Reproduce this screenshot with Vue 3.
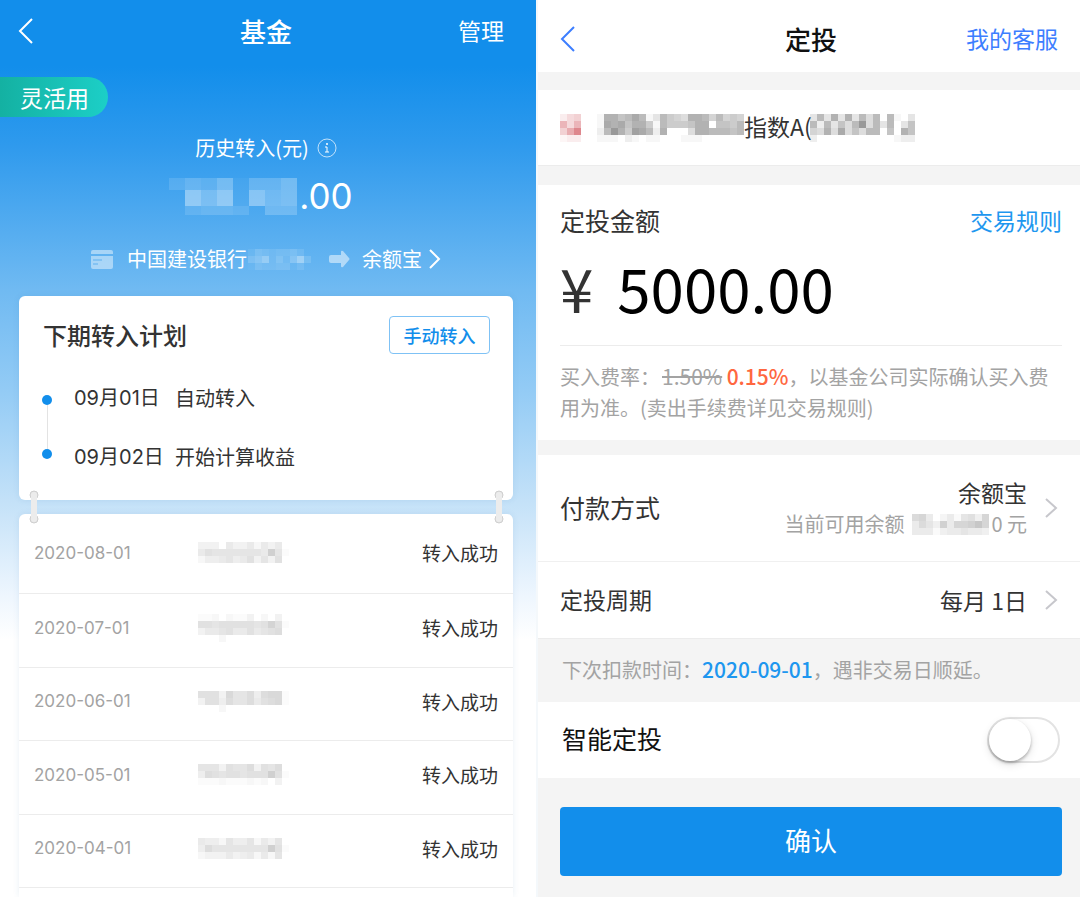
<script setup>
import { h, ref } from 'vue'

// Pixelated cover for private values: each hex digit is the strength of one cell.
const Mosaic = (props) => {
  const heights = props.heights || props.rows.map(() => 7)
  const cell = props.cell || 7
  const width = Math.max(...props.rows.map((r) => r.length)) * cell
  const total = heights.reduce((a, b) => a + b, 0)
  const rects = []
  let y = 0
  props.rows.forEach((row, i) => {
    ;[...row].forEach((c, x) => {
      const v = parseInt(c, 16)
      if (v) {
        rects.push(
          h('rect', {
            x: x * cell,
            y,
            width: cell,
            height: heights[i],
            fill: props.color || '#000',
            'fill-opacity': ((v / 15) * (props.strength || 0.25)).toFixed(3),
          }),
        )
      }
    })
    y += heights[i]
  })
  return h(
    'svg',
    {
      viewBox: `0 0 ${width} ${total}`,
      width,
      height: total,
      'shape-rendering': 'crispEdges',
      'aria-hidden': 'true',
    },
    rects,
  )
}
Mosaic.props = ['rows', 'heights', 'cell', 'color', 'strength']

const plans = [
  { date: '09月01日', text: '自动转入' },
  { date: '09月02日', text: '开始计算收益' },
]

const records = [
  { date: '2020-08-01', rows: ['3330533525350', '5766666665b61', '2445645736370'] },
  { date: '2020-07-01', rows: ['1120211302030', '7767777767a71', '3556755756780', '0002000000000'] },
  { date: '2020-06-01', rows: ['7773966848991', '3774866857891', '0002000000000'] },
  { date: '2020-05-01', rows: ['6663766837680', '4876776777b71', '1112111212030'] },
  { date: '2020-04-01', rows: ['5442644625360', '4866666666b71', '2333534525260'] },
]

const amount = ref('5000.00')
const smart = ref(false)
</script>

<template>
  <main class="screens">
    <section class="fund">
      <header class="bar">
        <button class="back" aria-label="返回">
          <svg width="16" height="28" viewBox="0 0 16 28"><path d="M14 2 2 14l12 12" /></svg>
        </button>
        <h1>基金</h1>
        <a href="#manage">管理</a>
      </header>

      <div class="tag">灵活用</div>

      <div class="summary">
        <div class="history">
          <span>历史转入(元)</span>
          <svg width="20" height="20" viewBox="0 0 20 20">
            <circle cx="10" cy="10" r="9" class="ring" />
            <circle cx="10" cy="6" r="1" class="dot" />
            <path d="M8 9h2v5M8 14h4" class="stem" />
          </svg>
        </div>
        <div class="total">
          <Mosaic
            :rows="['35471557', '0a7a1967', '03443055']"
            :heights="[12, 16, 9]"
            :cell="16"
            color="#fff"
            :strength="0.6"
          />
          <span>.00</span>
        </div>
        <a class="route" href="#route">
          <svg class="card-icon" width="22" height="19" viewBox="0 0 22 19">
            <path d="M2 0h18a2 2 0 0 1 2 2v2H0V2a2 2 0 0 1 2-2ZM0 6h22v11a2 2 0 0 1-2 2H2a2 2 0 0 1-2-2Z" />
            <path d="M2 10h9M2 14h5" class="lines" />
          </svg>
          <span>中国建设银行</span>
          <Mosaic
            class="route-mask"
            :rows="['254344530', '57a3637c4', '143344130']"
            color="#fff"
            :strength="0.5"
          />
          <svg class="arrow" width="21" height="18" viewBox="0 0 21 18">
            <path d="M2 5h10V2q0-2 2-1l6 7q1 1 0 2l-6 7q-2 1-2-1v-3H2q-2 0-2-2V7q0-2 2-2Z" />
          </svg>
          <span>余额宝</span>
          <svg class="go" width="13" height="20" viewBox="0 0 13 20"><path d="m2 1 9 9-9 9" /></svg>
        </a>
      </div>

      <div class="plan">
        <div class="plan-head">
          <h2>下期转入计划</h2>
          <button>手动转入</button>
        </div>
        <ol>
          <li v-for="p in plans" :key="p.date">
            <span class="when">{{ p.date }}</span><span>{{ p.text }}</span>
          </li>
        </ol>
        <svg v-for="side in ['left', 'right']" :key="side" class="ring-bar" :class="side" width="10" height="34" viewBox="0 0 10 34">
          <circle cx="5" cy="5" r="4" />
          <circle cx="5" cy="29" r="4" />
          <path d="M5 5v24" />
        </svg>
      </div>

      <ul class="records">
        <li v-for="r in records" :key="r.date">
          <time>{{ r.date }}</time>
          <Mosaic :rows="r.rows" />
          <span>转入成功</span>
        </li>
      </ul>
    </section>

    <section class="invest">
      <header class="bar light">
        <button class="back" aria-label="返回">
          <svg width="16" height="28" viewBox="0 0 16 28"><path d="M14 2 2 14l12 12" /></svg>
        </button>
        <h1>定投</h1>
        <a href="#service">我的客服</a>
      </header>

      <div class="product">
        <Mosaic class="logo-mask" :rows="['245', '848', '59d', '122']" color="#c01825" :strength="0.6" />
        <Mosaic
          :rows="['19978a813865499858565', '1a9a79961866679907768', '28c96ba82900049988878', '111021011000111000000']"
          :strength="0.5"
        />
        <span>指数A(</span>
        <Mosaic
          class="code-mask"
          :rows="['383939384808103', '8283748c4838037', '5494a4748807097', '200000000000122']"
          :strength="0.5"
        />
      </div>

      <div class="money">
        <div class="money-head">
          <label for="amount">定投金额</label>
          <a href="#rules">交易规则</a>
        </div>
        <div class="money-input">
          <span>¥</span>
          <input id="amount" v-model="amount" type="text" inputmode="decimal" />
        </div>
        <p>
          <span>买入费率：</span><del>1.50%</del> <strong>0.15%</strong><span>，以基金公司实际确认买入费</span><span>用为准。(卖出手续费详见交易规则)</span>
        </p>
      </div>

      <button class="row pay">
        <span class="label">付款方式</span>
        <span class="value">
          <span>余额宝</span>
          <span class="balance">
            <span>当前可用余额</span>
            <Mosaic class="balance-mask" :rows="['78402415638', '475394889b8', '44413445443']" :strength="0.3" />
            <span>0 元</span>
          </span>
        </span>
        <svg width="13" height="22" viewBox="0 0 13 22"><path d="m1 2 10 9-10 9" /></svg>
      </button>
      <button class="row cycle">
        <span class="label">定投周期</span>
        <span class="value">每月 1日</span>
        <svg width="13" height="22" viewBox="0 0 13 22"><path d="m1 2 10 9-10 9" /></svg>
      </button>

      <p class="next">下次扣款时间：<strong>2020-09-01</strong>，遇非交易日顺延。</p>

      <label class="smart">
        <span>智能定投</span>
        <input v-model="smart" type="checkbox" role="switch" />
      </label>

      <div class="submit"><button>确认</button></div>
    </section>
  </main>
</template>

<style>
body {
  margin: 0;
  background: #fff;
}
</style>

<style scoped>
* {
  box-sizing: border-box;
}
.screens {
  display: grid;
  grid-template-columns: 536fr 542fr;
  gap: 2px;
  height: 100vh;
  overflow: hidden;
  background: #f4f8fb;
  font-family: "Noto Sans CJK SC", sans-serif;
  color: #333;
}
h1, h2, p, ol, ul {
  margin: 0;
  padding: 0;
  list-style: none;
}
button {
  font-family: inherit;
  border: 0;
  background: none;
  padding: 0;
  color: inherit;
  cursor: pointer;
}
a {
  color: inherit;
  text-decoration: none;
}
svg {
  flex: none;
  fill: none;
}

.bar {
  display: grid;
  grid-template-columns: 1fr auto 1fr;
  align-items: center;
  height: 63px;
  padding: 0 32px 2px 18px;
  color: #fff;
}
.bar h1 {
  margin-left: 10px;
  font-size: 26px;
  line-height: 36px;
  font-weight: 500;
}
.bar a {
  justify-self: end;
  padding-bottom: 2px;
  font-size: 23px;
  line-height: 36px;
}
.back {
  justify-self: start;
  display: flex;
}
.back svg {
  stroke: currentColor;
  stroke-width: 2;
}

.fund {
  display: flex;
  flex-direction: column;
  min-width: 0;
  background: linear-gradient(#128eeb 0, #128eeb 66px, #2f9aed 146px, #70baf2 290px, #93cbf5 390px, #c3e1f8 500px, #eef6fe 596px, #fff 640px);
}
.tag {
  align-self: flex-start;
  margin-top: 14px;
  padding: 0 19px 0 20px;
  border-radius: 0 20px 20px 0;
  background: linear-gradient(90deg, #14b1a2, #1ccfc7);
  color: #fff;
  font-size: 23px;
  line-height: 40px;
}
.summary {
  display: flex;
  flex-direction: column;
  align-items: center;
  height: 179px;
  padding: 17px 4px 0 0;
  color: #fff;
  font-size: 20px;
  line-height: 28px;
}
.history {
  display: flex;
  align-items: center;
  gap: 8px;
}
.ring {
  stroke: #fff;
  stroke-opacity: 0.7;
}
.dot {
  fill: #fff;
}
.stem {
  stroke: #fff;
}
.total {
  display: flex;
  align-items: center;
  gap: 2px;
  height: 36px;
  margin-top: 16px;
  padding-right: 10px;
  font-family: Inter, sans-serif;
  font-size: 35px;
}
.route {
  display: flex;
  align-items: center;
  margin-top: 31px;
}
.card-icon {
  margin-right: 14px;
  fill: #fff;
  fill-opacity: 0.45;
}
.lines {
  stroke: #5fb0ef;
}
.route-mask {
  margin: 0 18px 0 1px;
}
.arrow {
  margin-right: 12px;
  fill: #fff;
  fill-opacity: 0.5;
}
.go {
  margin-left: 6px;
  stroke: #fff;
  stroke-width: 2;
}

.plan {
  position: relative;
  height: 204px;
  margin: 0 23px 0 19px;
  padding: 20px 23px 0 24px;
  border-radius: 6px;
  background: #fff;
  box-shadow: 0 0 6px rgba(40, 110, 160, 0.1);
}
.plan-head {
  display: flex;
  align-items: center;
  justify-content: space-between;
}
.plan h2 {
  font-size: 24px;
  line-height: 38px;
  font-weight: 500;
}
.plan-head button {
  width: 101px;
  height: 38px;
  border: 1px solid #7fc2f5;
  border-radius: 4px;
  color: #128eeb;
  font-size: 18px;
  font-weight: 500;
}
.plan ol {
  padding-top: 29px;
}
.plan li {
  position: relative;
  display: flex;
  height: 59px;
  padding-left: 31px;
  font-size: 20px;
  line-height: 30px;
}
.plan li::before {
  content: "";
  position: absolute;
  left: -1px;
  top: 12px;
  width: 10px;
  height: 10px;
  border-radius: 50%;
  background: #128eeb;
}
.plan li:last-child::before {
  top: 7px;
}
.plan li:first-child::after {
  content: "";
  position: absolute;
  left: 4px;
  top: 22px;
  width: 1px;
  height: 44px;
  background: #e3e3e3;
}
.when {
  width: 101px;
  font-family: Inter, "Noto Sans CJK SC", sans-serif;
}
.ring-bar {
  position: absolute;
  bottom: -24px;
  z-index: 1;
}
.ring-bar.left {
  left: 10px;
}
.ring-bar.right {
  right: 9px;
}
.ring-bar circle {
  fill: #e2e2e2;
  stroke: #cfcfcf;
}
.ring-bar path {
  stroke: #ececec;
  stroke-width: 6;
  stroke-linecap: round;
}

.records {
  flex: 1;
  margin: 14px 23px 0 19px;
  border-radius: 6px 6px 0 0;
  background: #fff;
  box-shadow: 0 0 6px rgba(40, 110, 160, 0.1);
}
.records li {
  display: grid;
  grid-template-columns: 164px 1fr auto;
  align-items: center;
  height: 74px;
  padding: 0 15px 6px;
  border-bottom: 1px solid #ececec;
  font-size: 19px;
}
.records li:nth-child(odd) {
  height: 73px;
}
.records li:first-child {
  height: 80px;
  padding-bottom: 2px;
}
.records time {
  font-family: Inter, sans-serif;
  font-size: 17px;
  color: #a3a3a3;
}

.invest {
  display: flex;
  flex-direction: column;
  min-width: 0;
  background: #f4f4f4;
}
.bar.light {
  height: 72px;
  padding: 6px 22px 0;
  background: #fff;
  color: #111;
}
.light h1 {
  margin-left: 4px;
}
.light .back,
.light a {
  color: #3d7eff;
}
.product {
  display: flex;
  align-items: center;
  height: 76px;
  margin-top: 18px;
  padding: 0 22px;
  border-bottom: 1px solid #ececec;
  background: #fff;
  font-size: 23px;
}
.product span {
  padding-bottom: 4px;
}
.logo-mask {
  margin-right: 16px;
}
.code-mask {
  margin-left: -2px;
}
.money {
  height: 255px;
  margin-top: 19px;
  padding: 15px 18px 0 22px;
  background: #fff;
}
.money-head {
  display: flex;
  align-items: center;
  justify-content: space-between;
  line-height: 40px;
}
.money-head label {
  font-size: 25px;
}
.money-head a {
  color: #1e97ef;
  font-size: 23px;
}
.money-input {
  display: flex;
  align-items: center;
  gap: 24px;
  height: 106px;
  padding-bottom: 12px;
  border-bottom: 1px solid #ececec;
  font-size: 60px;
  line-height: 88px;
}
.money-input input {
  flex: 1;
  min-width: 0;
  height: 88px;
  padding: 0;
  border: 0;
  outline: 0;
  background: none;
  color: #000;
  font: inherit;
}
.money p {
  padding-top: 15px;
  color: #a3a3a3;
  font-size: 20px;
  line-height: 31px;
}
.money del {
  margin-left: 2px;
  font-size: 21px;
}
.money strong {
  color: #ff6740;
  font-size: 21px;
  font-weight: 500;
}
.row {
  display: flex;
  align-items: center;
  padding: 0 22px;
  background: #fff;
  text-align: right;
  font-size: 23px;
}
.row .label {
  flex: 1;
  padding-bottom: 2px;
  text-align: left;
}
.row svg:last-child {
  margin-left: 18px;
  stroke: #c7c7cc;
  stroke-width: 2;
}
.pay {
  height: 107px;
  margin-top: 15px;
  border-bottom: 1px solid #f0f0f0;
}
.pay .label {
  font-size: 25px;
}
.pay .value {
  display: flex;
  flex-direction: column;
  line-height: 32px;
}
.balance {
  display: flex;
  align-items: center;
  color: #a3a3a3;
  font-size: 20px;
}
.balance-mask {
  margin: 0 2px 0 8px;
}
.cycle {
  height: 76px;
}
.next {
  padding: 0 0 2px 24px;
  border-top: 1px solid #ececec;
  color: #a3a3a3;
  font-size: 20px;
  line-height: 60px;
}
.next strong {
  color: #1e97ef;
  font-size: 21px;
  font-weight: 500;
}
.smart {
  display: flex;
  align-items: center;
  justify-content: space-between;
  height: 76px;
  padding: 0 20px 0 24px;
  background: #fff;
  color: #111;
  font-size: 25px;
}
.smart span {
  padding-bottom: 4px;
}
.smart input {
  appearance: none;
  width: 73px;
  height: 46px;
  margin: 0;
  border: 2px solid #e3e3e3;
  border-radius: 23px;
  background: #fff;
}
.smart input::before {
  content: "";
  display: block;
  width: 42px;
  height: 42px;
  border-radius: 50%;
  background: #fff;
  box-shadow: 0 2px 3px rgba(0, 0, 0, 0.25), 0 3px 10px rgba(0, 0, 0, 0.12);
}
.smart input:checked {
  background: #128eeb;
}
.smart input:checked::before {
  margin-left: 27px;
}
.submit {
  padding: 29px 18px 0 22px;
}
.submit button {
  width: 100%;
  height: 69px;
  padding-bottom: 4px;
  border-radius: 4px;
  background: #128eeb;
  color: #fff;
  font-size: 26px;
}
</style>
